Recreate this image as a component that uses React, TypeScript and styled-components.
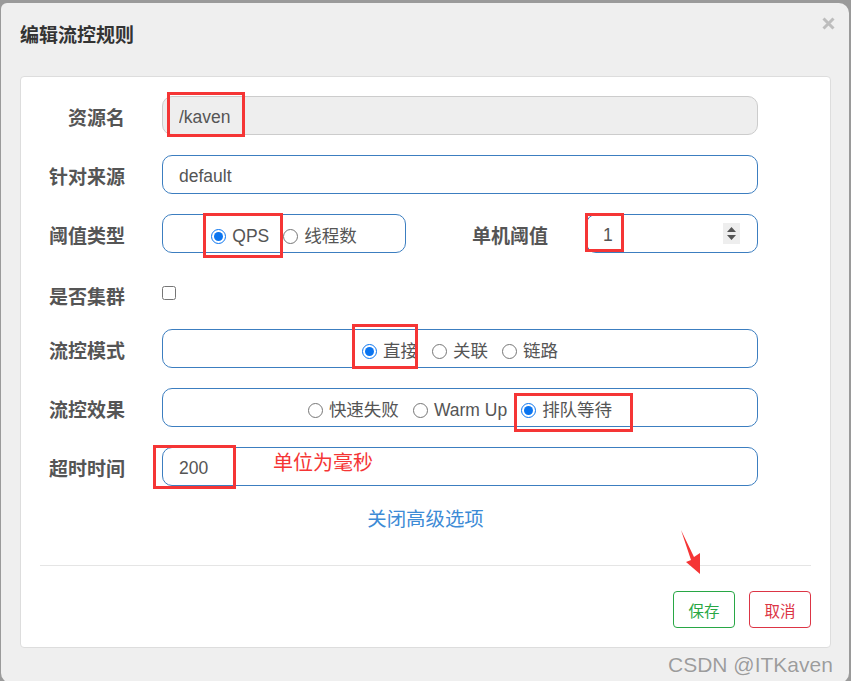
import React from 'react';
import styled, { createGlobalStyle } from 'styled-components';

const GlobalStyle = createGlobalStyle`
  html, body {
    margin: 0;
    padding: 0;
    background: #9a9a9a;
  }
  body {
    font-family: "Liberation Sans", "Noto Sans CJK SC", sans-serif;
  }
  * {
    box-sizing: border-box;
  }
`;

const Screen = styled.div`
  position: relative;
  width: 851px;
  height: 681px;
  overflow: hidden;
  padding: 3px 2px 0 1px;
`;

const Dialog = styled.div`
  position: relative;
  height: 680px;
  background: #efefef;
  border-radius: 6px 10px 10px 10px;
`;

const Header = styled.div`
  height: 73px;
  padding: 19px 19px 0 19px;
`;

const Title = styled.h4`
  margin: 0;
  font-size: 19px;
  line-height: 28px;
  font-weight: bold;
  color: #333;
`;

const CloseButton = styled.button`
  position: absolute;
  top: 12px;
  right: 13px;
  width: 16px;
  height: 16px;
  padding: 0;
  border: none;
  background: transparent;
  display: flex;
  align-items: center;
  justify-content: center;
`;

const Card = styled.div`
  margin: 0 18px 0 19px;
  background: #fff;
  border: 1px solid #ddd;
  border-radius: 4px;
  padding: 19px 0 19px 0;
`;

const Form = styled.form`
  display: flex;
  flex-direction: column;
  gap: 20px;
`;

const Row = styled.div<{ $compact?: boolean }>`
  display: grid;
  grid-template-columns: 104px 596px;
  column-gap: 37px;
  align-items: center;
  height: ${(p) => (p.$compact ? '30px' : '39px')};
  margin-top: ${(p) => (p.$compact ? '6px' : '0')};
`;

const Label = styled.label<{ $width?: number }>`
  font-size: 19px;
  line-height: 26px;
  padding-top: 6px;
  font-weight: bold;
  color: #555;
  text-align: right;
  white-space: nowrap;
  ${(p) => (p.$width ? `width: ${p.$width}px; flex: none;` : '')}
`;

const TextInput = styled.input`
  width: 100%;
  height: 39px;
  padding: 3px 16px 0 16px;
  border: 1px solid #3c7ec0;
  border-radius: 10px;
  background: #fff;
  color: #555;
  font-family: inherit;
  font-size: 17.5px;
  outline: none;

  &:disabled {
    background: #eee;
    border-color: #ccc;
    color: #555;
  }
`;

const Split = styled.div`
  display: flex;
  align-items: center;
`;

const RadioBox = styled.div<{ $width?: number }>`
  display: flex;
  align-items: center;
  justify-content: center;
  gap: 14px;
  height: 39px;
  width: ${(p) => (p.$width ? `${p.$width}px` : '100%')};
  flex: none;
  border: 1px solid #3c7ec0;
  border-radius: 10px;
  padding-top: 5px;
`;

const RadioOption = styled.label`
  display: flex;
  align-items: center;
  gap: 6px;
  font-size: 17.5px;
  line-height: 24px;
  color: #555;
  white-space: nowrap;

  input {
    width: 15px;
    height: 15px;
    margin: 0;
    accent-color: #0b75f0;
  }
`;

const NumberBox = styled.div`
  display: flex;
  align-items: center;
  width: 172px;
  height: 39px;
  margin-left: 38px;
  padding: 0 17px 0 16px;
  border: 1px solid #3c7ec0;
  border-radius: 10px;
`;

const NumberText = styled.input`
  flex: 1;
  min-width: 0;
  border: none;
  outline: none;
  padding: 3px 0 0 0;
  font-family: inherit;
  font-size: 17.5px;
  color: #555;
`;

const Spinner = styled.span`
  width: 17px;
  height: 21px;
  background: #eee;
  display: flex;
  align-items: center;
  justify-content: center;
`;

const Check = styled.input`
  width: 14px;
  height: 14px;
  margin: 0;
`;

const ToggleLink = styled.a`
  display: block;
  margin-top: 20px;
  text-align: center;
  font-size: 19.4px;
  line-height: 26px;
  color: #3d8bd6;
  text-decoration: none;
`;

const Divider = styled.hr`
  margin: 33px 19px 0 19px;
  border: none;
  border-top: 1px solid #e5e5e5;
`;

const Footer = styled.div`
  display: flex;
  justify-content: flex-end;
  gap: 14px;
  padding: 25px 19px 0 0;
`;

const Button = styled.button<{ $tone: 'save' | 'cancel' }>`
  width: 62px;
  height: 37px;
  border-radius: 4px;
  background: #fff;
  font-family: inherit;
  font-size: 15.5px;
  padding-top: 2px;
  border: 1px solid ${(p) => (p.$tone === 'save' ? '#28a745' : '#dc3545')};
  color: ${(p) => (p.$tone === 'save' ? '#28a745' : '#dc3545')};
`;

const Mark = styled.span<{ $x: number; $y: number; $w: number; $h: number }>`
  position: absolute;
  left: ${(p) => p.$x}px;
  top: ${(p) => p.$y}px;
  width: ${(p) => p.$w}px;
  height: ${(p) => p.$h}px;
  border: 3px solid #f53535;
  pointer-events: none;
`;

const Note = styled.span`
  position: absolute;
  left: 273px;
  top: 451px;
  font-size: 20px;
  line-height: 24px;
  color: #f53535;
`;

const Arrow = styled.svg`
  position: absolute;
  left: 675px;
  top: 525px;
`;

const Watermark = styled.span`
  position: absolute;
  left: 668px;
  top: 653px;
  font-size: 21px;
  line-height: 24px;
  color: #9c9c9c;
  text-shadow: 0 0 1px #fff;
`;

const marks = [
  { x: 167, y: 92, w: 78, h: 45 },
  { x: 203, y: 213, w: 80, h: 45 },
  { x: 585, y: 213, w: 39, h: 39 },
  { x: 352, y: 324, w: 66, h: 45 },
  { x: 514, y: 393, w: 119, h: 39 },
  { x: 153, y: 445, w: 83, h: 44 },
];

const App: React.FC = () => {
  return (
    <Screen>
      <GlobalStyle />
      <Dialog>
        <Header>
          <Title>编辑流控规则</Title>
        </Header>
        <CloseButton aria-label="close">
          <svg width="13" height="13" viewBox="0 0 13 13">
            <path d="M1.5 1.5 L11.5 11.5 M11.5 1.5 L1.5 11.5" stroke="#bdbdbd" strokeWidth="3" />
          </svg>
        </CloseButton>
        <Card>
          <Form>
            <Row>
              <Label>资源名</Label>
              <TextInput value="/kaven" disabled readOnly />
            </Row>
            <Row>
              <Label>针对来源</Label>
              <TextInput value="default" readOnly />
            </Row>
            <Row>
              <Label>阈值类型</Label>
              <Split>
                <RadioBox $width={244}>
                  <RadioOption>
                    <input type="radio" name="grade" defaultChecked />
                    QPS
                  </RadioOption>
                  <RadioOption>
                    <input type="radio" name="grade" />
                    线程数
                  </RadioOption>
                </RadioBox>
                <Label $width={142}>单机阈值</Label>
                <NumberBox>
                  <NumberText value="1" readOnly />
                  <Spinner>
                    <svg width="11" height="15" viewBox="0 0 11 15">
                      <path d="M5.5 1 L10 6 L1 6 Z M5.5 14 L10 9 L1 9 Z" fill="#555" />
                    </svg>
                  </Spinner>
                </NumberBox>
              </Split>
            </Row>
            <Row $compact>
              <Label>是否集群</Label>
              <div>
                <Check type="checkbox" />
              </div>
            </Row>
            <Row>
              <Label>流控模式</Label>
              <RadioBox>
                <RadioOption>
                  <input type="radio" name="strategy" defaultChecked />
                  直接
                </RadioOption>
                <RadioOption>
                  <input type="radio" name="strategy" />
                  关联
                </RadioOption>
                <RadioOption>
                  <input type="radio" name="strategy" />
                  链路
                </RadioOption>
              </RadioBox>
            </Row>
            <Row>
              <Label>流控效果</Label>
              <RadioBox>
                <RadioOption>
                  <input type="radio" name="behavior" />
                  快速失败
                </RadioOption>
                <RadioOption>
                  <input type="radio" name="behavior" />
                  Warm Up
                </RadioOption>
                <RadioOption>
                  <input type="radio" name="behavior" defaultChecked />
                  排队等待
                </RadioOption>
              </RadioBox>
            </Row>
            <Row>
              <Label>超时时间</Label>
              <TextInput value="200" readOnly />
            </Row>
          </Form>
          <ToggleLink>关闭高级选项</ToggleLink>
          <Divider />
          <Footer>
            <Button $tone="save">保存</Button>
            <Button $tone="cancel">取消</Button>
          </Footer>
        </Card>
      </Dialog>

      {marks.map((m, i) => (
        <Mark key={i} $x={m.x} $y={m.y} $w={m.w} $h={m.h} />
      ))}
      <Note>单位为毫秒</Note>
      <Arrow width="35" height="55" viewBox="0 0 35 55">
        <polygon points="6,5 19,32 25,28 25,49 11,37 16,35" fill="#f53535" />
      </Arrow>
      <Watermark>CSDN @ITKaven</Watermark>
    </Screen>
  );
};

export default App;
